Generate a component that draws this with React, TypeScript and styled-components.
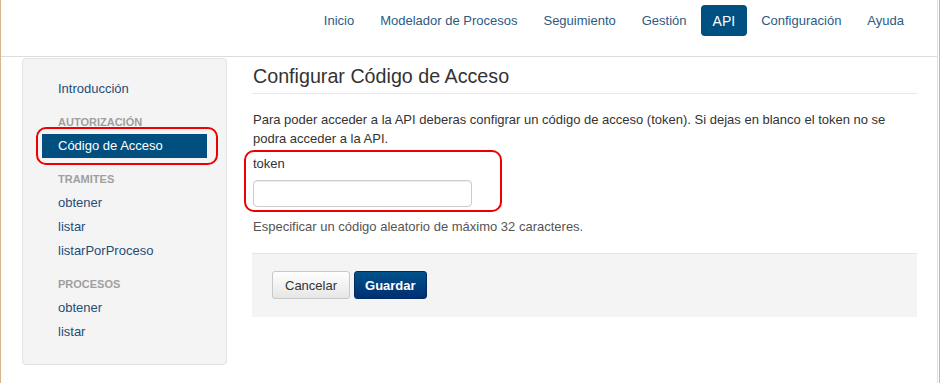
import React from 'react';
import styled, { createGlobalStyle } from 'styled-components';

const GlobalStyle = createGlobalStyle`
  html, body {
    margin: 0;
    padding: 0;
    background: #fff;
  }
  body {
    font-family: "Liberation Sans", Arial, sans-serif;
    font-size: 13px;
    color: #333;
  }
`;

const Frame = styled.div`
  width: 940px;
  height: 383px;
  box-sizing: border-box;
  border-left: 1px solid #d6b68e;
  border-right: 1px solid #d6b68e;
  overflow: hidden;
`;

const Inner = styled.div`
  height: 100%;
  margin-right: 1px;
  border-right: 1px solid #e2e2e2;
  box-sizing: border-box;
`;

const Header = styled.header`
  height: 57px;
  box-sizing: border-box;
  border-bottom: 1px solid #dddddd;
  display: flex;
  justify-content: flex-end;
  align-items: flex-start;
  padding: 5px 21px 0 0;
`;

const NavList = styled.nav`
  display: flex;
  gap: 2px;
  height: 31px;
`;

const NavItem = styled.a<{ $active?: boolean }>`
  display: flex;
  align-items: center;
  padding: 0 12px;
  height: 31px;
  border-radius: 4px;
  text-decoration: none;
  color: ${p => (p.$active ? '#fff' : '#2b5b84')};
  background: ${p => (p.$active ? '#005082' : 'transparent')};
  font-size: ${p => (p.$active ? '14px' : '13px')};
`;

const Body = styled.div`
  display: flex;
  align-items: flex-start;
  gap: 25px;
  padding: 1px 20px 0 21px;
`;

const Sidebar = styled.aside`
  width: 205px;
  box-sizing: border-box;
  background: #f4f4f4;
  border: 1px solid #e3e3e3;
  border-radius: 4px;
  padding: 18px 19px 20px 19px;
`;

const SideList = styled.ul`
  list-style: none;
  margin: 0;
  padding: 0;
`;

const SideHeader = styled.li`
  height: 24px;
  line-height: 24px;
  margin-top: 9px;
  padding-left: 16px;
  font-size: 11px;
  font-weight: bold;
  color: #9f9f9f;
`;

const SideLink = styled.li<{ $active?: boolean }>`
  position: relative;
  height: 24px;
  line-height: 24px;
  padding-left: 16px;
  font-size: 13px;
  color: ${p => (p.$active ? '#fff' : '#1f4d78')};
  background: ${p => (p.$active ? '#004f7f' : 'transparent')};
`;

const Highlight = styled.span<{ $top: number; $left: number; $right: number; $bottom: number }>`
  position: absolute;
  top: ${p => p.$top}px;
  left: ${p => p.$left}px;
  right: ${p => p.$right}px;
  bottom: ${p => p.$bottom}px;
  border: 2px solid #ee0000;
  border-radius: 10px;
  pointer-events: none;
`;

const Main = styled.main`
  flex: 1;
  padding-top: 7px;
`;

const Title = styled.h3`
  margin: 0;
  padding: 0 0 6px 1px;
  font-size: 19.7px;
  line-height: 22px;
  font-weight: normal;
  color: #333;
  border-bottom: 1px solid #e8e8e8;
`;

const Intro = styled.p`
  margin: 16px 0 0 1px;
  line-height: 19px;
  padding-right: 10px;
`;

const FormGroup = styled.div`
  position: relative;
  margin: 6px 0 0 1px;
  width: 219px;
`;

const Label = styled.label`
  display: block;
  line-height: 19px;
  margin-bottom: 7px;
`;

const TokenInput = styled.input`
  display: block;
  width: 219px;
  height: 27px;
  box-sizing: border-box;
  border: 1px solid #cccccc;
  border-radius: 4px;
  box-shadow: inset 0 1px 1px rgba(0, 0, 0, 0.075);
  outline: none;
  font-family: inherit;
  font-size: 13px;
`;

const HelpText = styled.p`
  margin: 10px 0 0 1px;
  line-height: 19px;
  color: #555;
`;

const Actions = styled.div`
  margin-top: 17px;
  background: #f4f4f4;
  border-top: 1px solid #e5e5e5;
  padding: 17px 20px 18px 20px;
  display: flex;
  gap: 4px;
`;

const Button = styled.button<{ $primary?: boolean }>`
  height: 28px;
  padding: 0 ${p => (p.$primary ? '10px' : '12px')};
  border-radius: 3px;
  font-family: inherit;
  font-size: 13px;
  cursor: pointer;
  border: 1px solid ${p => (p.$primary ? '#002a63' : '#c8c8c8')};
  color: ${p => (p.$primary ? '#fff' : '#333')};
  font-weight: ${p => (p.$primary ? 'bold' : 'normal')};
  background: ${p =>
    p.$primary
      ? 'linear-gradient(#00528a, #002f72)'
      : 'linear-gradient(#ffffff, #e6e6e6)'};
`;

const sections = [
  { title: 'TRAMITES', links: ['obtener', 'listar', 'listarPorProceso'] },
  { title: 'PROCESOS', links: ['obtener', 'listar'] },
];

const navItems = ['Inicio', 'Modelador de Procesos', 'Seguimiento', 'Gestión', 'API', 'Configuración', 'Ayuda'];

const App: React.FC = () => {
  return (
    <>
      <GlobalStyle />
      <Frame>
        <Inner>
          <Header>
            <NavList>
              {navItems.map(item => (
                <NavItem key={item} $active={item === 'API'}>
                  {item}
                </NavItem>
              ))}
            </NavList>
          </Header>
          <Body>
            <Sidebar>
              <SideList>
                <SideLink>Introducción</SideLink>
                <SideHeader>AUTORIZACIÓN</SideHeader>
                <SideLink $active>
                  Código de Acceso
                  <Highlight $top={-7} $left={-6} $right={-11} $bottom={-7} />
                </SideLink>
                {sections.map(s => (
                  <React.Fragment key={s.title}>
                    <SideHeader>{s.title}</SideHeader>
                    {s.links.map(l => (
                      <SideLink key={s.title + l}>{l}</SideLink>
                    ))}
                  </React.Fragment>
                ))}
              </SideList>
            </Sidebar>
            <Main>
              <Title>Configurar Código de Acceso</Title>
              <Intro>
                Para poder acceder a la API deberas configrar un código de acceso (token). Si dejas en blanco el
                token no se podra acceder a la API.
              </Intro>
              <FormGroup>
                <Label>token</Label>
                <TokenInput type="text" />
                <Highlight $top={-4} $left={-9} $right={-30} $bottom={-5} />
              </FormGroup>
              <HelpText>Especificar un código aleatorio de máximo 32 caracteres.</HelpText>
              <Actions>
                <Button>Cancelar</Button>
                <Button $primary>Guardar</Button>
              </Actions>
            </Main>
          </Body>
        </Inner>
      </Frame>
    </>
  );
};

export default App;
